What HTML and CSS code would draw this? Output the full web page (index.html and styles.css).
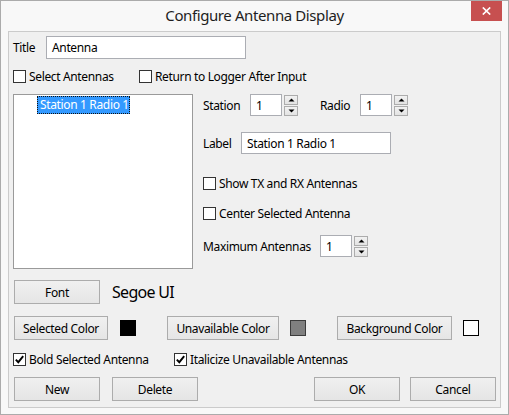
FILE: index.html
```html
<!DOCTYPE html>
<html>
<head>
<meta charset="utf-8">
<title>Configure Antenna Display</title>
<link rel="stylesheet" href="styles.css">
</head>
<body>
<div class="window">
  <div class="titlebar">
    <div class="tb-spacer"></div>
    <div class="tb-title">Configure Antenna Display</div>
    <div class="tb-controls">
      <div class="close-btn"><svg width="9" height="8" viewBox="0 0 9 8"><path d="M0.8 0.5 L8.2 7.5 M8.2 0.5 L0.8 7.5" stroke="#fff" stroke-width="1.7" fill="none"/></svg></div>
    </div>
  </div>
  <div class="client">
    <div class="row r-title">
      <span class="lbl l-title">Title</span>
      <div class="textbox in-title">Antenna</div>
    </div>
    <div class="row r-checks">
      <div class="check c-select"><span class="box"></span><span>Select Antennas</span></div>
      <div class="check"><span class="box"></span><span>Return to Logger After Input</span></div>
    </div>
    <div class="row r-main">
      <div class="listbox">
        <div class="list-item"><span class="item-sel">Station 1 Radio 1</span></div>
      </div>
      <div class="panel">
        <div class="prow p-station">
          <span class="lbl l-station">Station</span>
          <div class="textbox spin-input">1</div>
          <div class="spin-btns">
            <div class="spin-btn"><svg width="7" height="4" viewBox="0 0 7 4"><polygon points="0.5,3.5 3.5,0.5 6.5,3.5" fill="#000"/></svg></div>
            <div class="spin-btn"><svg width="7" height="4" viewBox="0 0 7 4"><polygon points="0.5,0.5 6.5,0.5 3.5,3.5" fill="#000"/></svg></div>
          </div>
          <span class="lbl l-radio">Radio</span>
          <div class="textbox spin-input">1</div>
          <div class="spin-btns">
            <div class="spin-btn"><svg width="7" height="4" viewBox="0 0 7 4"><polygon points="0.5,3.5 3.5,0.5 6.5,3.5" fill="#000"/></svg></div>
            <div class="spin-btn"><svg width="7" height="4" viewBox="0 0 7 4"><polygon points="0.5,0.5 6.5,0.5 3.5,3.5" fill="#000"/></svg></div>
          </div>
        </div>
        <div class="prow p-label">
          <span class="lbl l-label">Label</span>
          <div class="textbox in-label">Station 1 Radio 1</div>
        </div>
        <div class="prow p-check1">
          <div class="check"><span class="box"></span><span>Show TX and RX Antennas</span></div>
        </div>
        <div class="prow p-check2">
          <div class="check"><span class="box"></span><span>Center Selected Antenna</span></div>
        </div>
        <div class="prow p-max">
          <span class="lbl l-max">Maximum Antennas</span>
          <div class="textbox spin-input">1</div>
          <div class="spin-btns">
            <div class="spin-btn"><svg width="7" height="4" viewBox="0 0 7 4"><polygon points="0.5,3.5 3.5,0.5 6.5,3.5" fill="#000"/></svg></div>
            <div class="spin-btn"><svg width="7" height="4" viewBox="0 0 7 4"><polygon points="0.5,0.5 6.5,0.5 3.5,3.5" fill="#000"/></svg></div>
          </div>
        </div>
      </div>
    </div>
    <div class="row r-font">
      <div class="btn b-font">Font</div>
      <span class="font-name">Segoe UI</span>
    </div>
    <div class="row r-colors">
      <div class="btn b-selected">Selected Color</div>
      <span class="swatch sw-black"></span>
      <div class="btn b-unavail">Unavailable Color</div>
      <span class="swatch sw-gray"></span>
      <div class="btn b-bg">Background Color</div>
      <span class="swatch sw-white"></span>
    </div>
    <div class="row r-checks2">
      <div class="check c-bold"><span class="box checked"><svg width="11" height="11" viewBox="0 0 11 11"><path d="M1.8 5.6 L4.3 8.2 L9.2 2.2" stroke="#000" stroke-width="1.9" fill="none"/></svg></span><span>Bold Selected Antenna</span></div>
      <div class="check"><span class="box checked"><svg width="11" height="11" viewBox="0 0 11 11"><path d="M1.8 5.6 L4.3 8.2 L9.2 2.2" stroke="#000" stroke-width="1.9" fill="none"/></svg></span><span>Italicize Unavailable Antennas</span></div>
    </div>
    <div class="row r-buttons">
      <div class="btn b-new">New</div>
      <div class="btn b-delete">Delete</div>
      <div class="btn b-ok">OK</div>
      <div class="btn b-cancel">Cancel</div>
    </div>
  </div>
</div>
</body>
</html>
```

FILE: styles.css
```css
html, body {
  margin: 0;
  padding: 0;
  background: #ffffff;
}

body {
  font-family: "Noto Sans", "Open Sans", sans-serif;
  font-size: 12px;
  letter-spacing: -0.35px;
  color: #000;
}

.window {
  width: 509px;
  height: 415px;
  box-sizing: border-box;
  border: 1px solid #ababab;
  background: #f8f8f8;
  display: flex;
  flex-direction: column;
}

.titlebar {
  height: 30px;
  flex: none;
  display: grid;
  grid-template-columns: 1fr auto 1fr;
}

.tb-title {
  font-size: 15px;
  letter-spacing: -0.4px;
  line-height: 28px;
  color: #1e1e1e;
  white-space: nowrap;
}

.tb-controls {
  display: flex;
  justify-content: flex-end;
  align-items: flex-start;
  padding-right: 6px;
}

.close-btn {
  width: 31px;
  height: 20px;
  background: #c75050;
  display: flex;
  align-items: center;
  justify-content: center;
}

.client {
  flex: 1;
  margin: 0 7px 6px 7px;
  border: 1px solid #cbcbcb;
  background: #f0f0f0;
  padding: 4px 4px 0 4px;
  display: flex;
  flex-direction: column;
}

.row {
  display: flex;
  align-items: center;
  flex: none;
}

.lbl {
  white-space: nowrap;
  flex: none;
}

.textbox {
  box-sizing: border-box;
  background: #fff;
  border: 1px solid #abadb3;
  display: flex;
  align-items: center;
  padding-left: 5px;
  white-space: nowrap;
  flex: none;
}

/* row 1 */
.r-title { height: 23px; }
.l-title { width: 33px; }
.in-title { width: 200px; height: 23px; }

/* checkboxes */
.check {
  display: flex;
  align-items: center;
  white-space: nowrap;
  flex: none;
}

.box {
  width: 13px;
  height: 13px;
  box-sizing: border-box;
  border: 1px solid #333;
  background: #fff;
  margin-right: 3px;
  flex: none;
  display: flex;
  align-items: center;
  justify-content: center;
}

.r-checks { margin-top: 9px; height: 17px; }
.c-select { width: 126px; }

/* main area */
.r-main {
  margin-top: 9px;
  height: 175px;
  align-items: stretch;
}

.listbox {
  width: 180px;
  height: 175px;
  box-sizing: border-box;
  border: 1px solid #9a9a9a;
  background: #fff;
  flex: none;
}

.list-item {
  padding-left: 23px;
  padding-top: 1px;
  display: flex;
}

.item-sel {
  background: #3399ff;
  color: #fff;
  border: 1px dotted #111;
  line-height: 16px;
  padding: 0 0 0 2px;
  white-space: nowrap;
}

.panel {
  margin-left: 10px;
  display: flex;
  flex-direction: column;
}

.prow {
  display: flex;
  align-items: center;
}

.p-station { height: 22px; }
.l-station { width: 47px; }
.l-radio { width: 40px; margin-left: 22px; }

.spin-input { width: 32px; height: 22px; }

.spin-btns {
  margin-left: 2px;
  height: 22px;
  display: flex;
  flex-direction: column;
  justify-content: space-between;
  padding: 1px 0 0 0;
  box-sizing: border-box;
}

.spin-btn {
  width: 14px;
  height: 10px;
  box-sizing: border-box;
  border: 1px solid #acacac;
  background: linear-gradient(#f2f2f2, #e3e3e3);
  display: flex;
  align-items: center;
  justify-content: center;
}

.p-label { margin-top: 16px; height: 22px; }
.l-label { width: 38px; }
.in-label { width: 150px; height: 22px; }

.p-check1 { margin-top: 21px; height: 17px; }
.p-check2 { margin-top: 13px; height: 17px; }

.p-max { margin-top: 13px; height: 22px; }
.l-max { width: 117px; }

/* buttons */
.btn {
  height: 24px;
  box-sizing: border-box;
  border: 1px solid #acacac;
  background: linear-gradient(#f0f0f0, #e5e5e5);
  display: flex;
  align-items: center;
  justify-content: center;
  white-space: nowrap;
  flex: none;
}

.r-font { margin-top: 11px; height: 24px; }
.b-font { width: 86px; margin-left: 1px; }
.font-name { margin-left: 12px; font-size: 16px; letter-spacing: -0.7px; white-space: nowrap; }

.r-colors { margin-top: 12px; height: 24px; }
.b-selected { width: 94px; margin-left: 1px; }
.b-unavail { width: 112px; margin-left: 31px; }
.b-bg { width: 115px; margin-left: 31px; }

.swatch {
  width: 16px;
  height: 16px;
  box-sizing: border-box;
  margin-left: 12px;
  flex: none;
}
.sw-black { background: #000; border: 1px solid #000; }
.sw-gray { background: #808080; border: 1px solid #3c3c3c; margin-left: 11px; }
.sw-white { background: #fff; border: 1px solid #000; margin-left: 11px; }

.r-checks2 { margin-top: 10px; height: 19px; }
.c-bold { width: 161px; }

.r-buttons { margin-top: 8px; height: 24px; }
.b-new { width: 86px; margin-left: 1px; }
.b-delete { width: 86px; margin-left: 12px; }
.b-ok { width: 86px; margin-left: 116px; }
.b-cancel { width: 86px; margin-left: 10px; }
```
